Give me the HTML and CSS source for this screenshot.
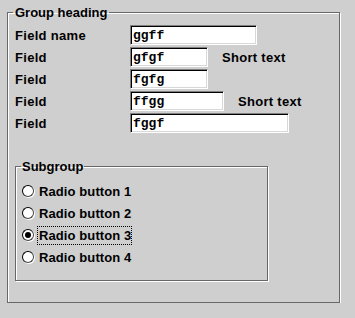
FILE: index.html
```html
<!DOCTYPE html>
<html lang="en">
<head>
  <meta charset="UTF-8" />
  <meta name="viewport" content="width=device-width, initial-scale=1.0"/>
  <title>Group form</title>
  <link rel="stylesheet" href="styles.css">
</head>
<body>
  <fieldset class="group">
    <legend>Group heading</legend>

    <div class="fields">
      <div class="row">
        <label class="name">Field name</label>
        <input class="field w-name" type="text" value="ggff">
      </div>
      <div class="row">
        <label class="name">Field</label>
        <input class="field w-short" type="text" value="gfgf">
        <span class="note">Short text</span>
      </div>
      <div class="row">
        <label class="name">Field</label>
        <input class="field w-short" type="text" value="fgfg">
      </div>
      <div class="row">
        <label class="name">Field</label>
        <input class="field w-mid" type="text" value="ffgg">
        <span class="note">Short text</span>
      </div>
      <div class="row">
        <label class="name">Field</label>
        <input class="field w-long" type="text" value="fggf">
      </div>
    </div>

    <fieldset class="subgroup">
      <legend>Subgroup</legend>
      <div class="radio"><span class="dot"></span><span class="text">Radio button 1</span></div>
      <div class="radio"><span class="dot"></span><span class="text">Radio button 2</span></div>
      <div class="radio"><span class="dot checked"></span><span class="text focus">Radio button 3</span></div>
      <div class="radio"><span class="dot"></span><span class="text">Radio button 4</span></div>
    </fieldset>
  </fieldset>
</body>
</html>
```

FILE: styles.css
```css
body {
  margin: 0;
  background: #cfcfcf;
  color: #000;
  font-family: "Liberation Sans", Arial, sans-serif;
  font-weight: bold;
  font-size: 13px;
  letter-spacing: 0.3px;
}

fieldset {
  box-sizing: border-box;
  border: 1px solid #686868;
  box-shadow: 1px 1px 0 #fff, inset 1px 1px 0 #fff;
  min-width: 0;
}

legend {
  line-height: 17px;
  height: 17px;
  letter-spacing: 0;
}

.group {
  width: 333px;
  margin: 4px 0 0 7px;
  padding: 4px 7px 21px 7px;
}

.group > legend {
  padding: 0 2px;
  margin-left: -2px;
}

.fields {
  display: flex;
  flex-direction: column;
  gap: 2px;
}

.row {
  display: flex;
  align-items: center;
  height: 20px;
}

.name {
  width: 115px;
}

.field {
  box-sizing: border-box;
  height: 20px;
  margin: 0;
  border: 1px solid;
  border-color: #808080 #fff #fff #808080;
  box-shadow: inset 1px 1px 0 #000, inset -1px -1px 0 #d8d8d8;
  background: #fff;
  font-family: "Liberation Mono", "Courier New", monospace;
  font-weight: bold;
  font-size: 13px;
  letter-spacing: 0;
  padding: 1px 0 0 2px;
  outline: none;
}

.w-name { width: 127px; }
.w-short { width: 78px; }
.w-mid { width: 94px; }
.w-long { width: 159px; }

.note {
  margin-left: 14px;
}

.subgroup {
  width: 253px;
  margin: 25px 0 0 0;
  padding: 5px 6px 12px 6px;
}

.subgroup > legend {
  padding: 0 1px;
  margin-left: -1px;
}

.radio {
  display: flex;
  align-items: center;
  height: 22px;
}

.dot {
  box-sizing: border-box;
  width: 12px;
  height: 12px;
  border-radius: 50%;
  background: #fff;
  border: 1px solid;
  border-color: #000 #444 #444 #000;
  box-shadow: 1px 1px 0 #fff;
  display: flex;
  align-items: center;
  justify-content: center;
  margin: 0 3px 0 0;
}

.dot.checked::after {
  content: "";
  width: 6px;
  height: 6px;
  border-radius: 50%;
  background: #000;
}

.text {
  padding: 1px 0 1px 1px;
  border: 1px dotted transparent;
  letter-spacing: 0.1px;
}

.text.focus {
  border-color: #000;
}
```
